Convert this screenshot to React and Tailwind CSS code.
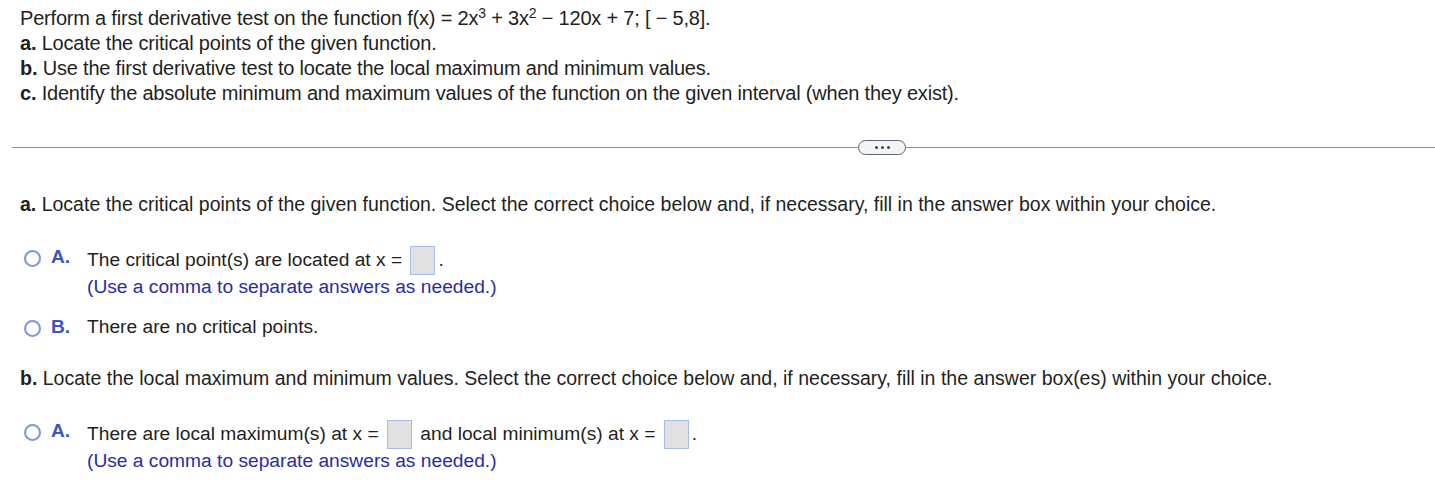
import React from "react";

function Box() {
  return <span className="inline-block w-[25px] h-[29px] align-middle mx-[3px] bg-[#e1e1e1] border border-[#a4bdec]" />;
}

function Radio({ letter, children }) {
  return (
    <div className="flex items-start">
      <span className="mt-[4px] w-[17px] h-[17px] rounded-full border-2 border-[#7c96e0] shrink-0" />
      <span className="ml-[10px] w-[36px] font-bold text-[#3a54c0] shrink-0">{letter}</span>
      <div>{children}</div>
    </div>
  );
}

export default function App() {
  return (
    <div className="bg-white w-[1435px] h-[480px] text-[#1f1f1f]" style={{ fontFamily: '"Liberation Sans", Arial, sans-serif' }}>
      {/* Problem statement */}
      <div className="pl-[20px] pt-[6px] text-[20px] leading-[25px] tracking-[-0.2px]">
        <p>
          Perform a first derivative test on the function f(x) = 2x<sup className="text-[14px]">3</sup> + 3x<sup className="text-[14px]">2</sup> − 120x + 7; [ − 5,8].
        </p>
        <p><b>a.</b> Locate the critical points of the given function.</p>
        <p><b>b.</b> Use the first derivative test to locate the local maximum and minimum values.</p>
        <p><b>c.</b> Identify the absolute minimum and maximum values of the function on the given interval (when they exist).</p>
      </div>

      {/* Divider */}
      <div className="mt-[34px] ml-[12px] flex items-center">
        <div className="w-[846px] h-px bg-[#8a909c]" />
        <div className="w-[48px] h-[15px] rounded-full border border-[#5d6573] bg-[#f3f4f6] flex items-center justify-center gap-[3px]">
          <span className="w-[3px] h-[3px] rounded-full bg-[#3d4450]" />
          <span className="w-[3px] h-[3px] rounded-full bg-[#3d4450]" />
          <span className="w-[3px] h-[3px] rounded-full bg-[#3d4450]" />
        </div>
        <div className="flex-1 h-px bg-[#8a909c]" />
      </div>

      {/* Part a */}
      <div className="pl-[20px] text-[19.2px] leading-[22px]">
        <p className="mt-[38px] text-[19.5px]"><b>a.</b> Locate the critical points of the given function. Select the correct choice below and, if necessary, fill in the answer box within your choice.</p>
        <div className="mt-[31px] pl-[4px]">
          <Radio letter="A.">
            <p>The critical point(s) are located at x = <Box />.</p>
            <p className="text-[#2b2ba8] mt-[1px]">(Use a comma to separate answers as needed.)</p>
          </Radio>
        </div>
        <div className="mt-[18px] pl-[4px]">
          <Radio letter="B.">
            <p>There are no critical points.</p>
          </Radio>
        </div>

        {/* Part b */}
        <p className="mt-[29px] text-[19.5px]"><b>b.</b> Locate the local maximum and minimum values. Select the correct choice below and, if necessary, fill in the answer box(es) within your choice.</p>
        <div className="mt-[31px] pl-[4px]">
          <Radio letter="A.">
            <p>There are local maximum(s) at x = <Box /> and local minimum(s) at x = <Box />.</p>
            <p className="text-[#2b2ba8] mt-[1px]">(Use a comma to separate answers as needed.)</p>
          </Radio>
        </div>
      </div>
    </div>
  );
}
